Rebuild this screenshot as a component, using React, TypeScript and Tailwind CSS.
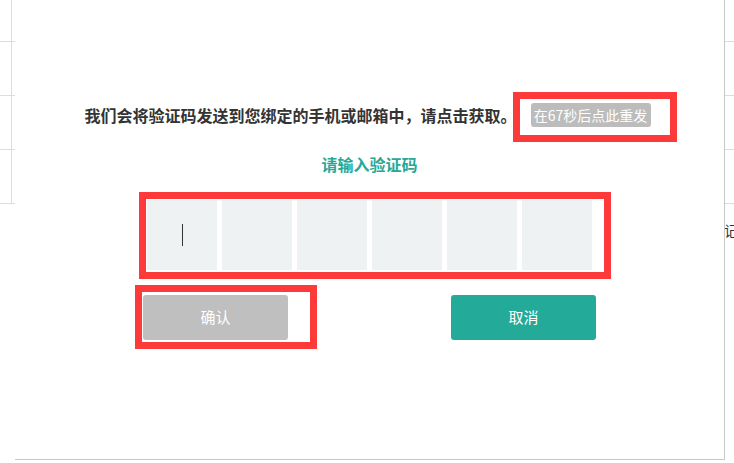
import React from "react";

const RED = "border-[#fd3a3a]";

function BgRow({ h }: { h: string }) {
  return (
    <div className={`flex border-b border-[#dddddd] ${h}`}>
      <div className="w-[12px] border-r border-[#dddddd]" />
      <div className="flex-1" />
    </div>
  );
}

export default function App() {
  return (
    <div className="relative w-[734px] h-[463px] overflow-hidden bg-white font-['Noto_Sans_CJK_SC','Noto_Sans',sans-serif]">
      {/* background page table */}
      <div className="flex flex-col">
        <BgRow h="h-[42px]" />
        <BgRow h="h-[54px]" />
        <BgRow h="h-[54px]" />
        <BgRow h="h-[54px]" />
        <div className="flex h-[52px] items-center justify-end">
          <span className="mr-[-4px] text-[14px] text-[#333]">登记</span>
        </div>
      </div>

      {/* modal */}
      <div className="absolute left-[15px] top-0 flex h-[460px] w-[710px] flex-col border-b border-r border-[#c8c8c8] bg-white pt-[103px]">
        <div className="flex h-[24px] items-center justify-center gap-[14px] pr-[4px]">
          <span className="whitespace-nowrap text-[16px] font-bold leading-[24px] text-[#333333]">
            我们会将验证码发送到您绑定的手机或邮箱中，请点击获取。
          </span>
          <div className="relative">
            <button className="flex h-[24px] w-[120px] items-center justify-center whitespace-nowrap rounded-[3px] bg-[#bcbcbc] text-[14px] leading-[24px] text-white">
              在67秒后点此重发
            </button>
            <div className={`pointer-events-none absolute bottom-[-15px] left-[-18px] right-[-26px] top-[-11px] border-[7px] ${RED}`} />
          </div>
        </div>

        <div className="mt-[25px] h-[24px] text-center text-[16px] font-bold leading-[24px] text-[#26a898]">
          请输入验证码
        </div>

        <div className="relative mt-[24px] flex gap-[5px] self-center">
          {[0, 1, 2, 3, 4, 5].map((i) => (
            <div key={i} className="flex h-[70px] w-[70px] items-center justify-center bg-[#eef2f3]">
              {i === 0 && <div className="h-[22px] w-[1px] bg-[#333333]" />}
            </div>
          ))}
          <div className={`pointer-events-none absolute bottom-[-9px] left-[-8px] right-[-19px] top-[-8px] border-[7px] ${RED}`} />
        </div>

        <div className="mt-[25px] flex justify-center gap-[163px]">
          <div className="relative">
            <button className="flex h-[45px] w-[145px] items-center justify-center rounded-[3px] bg-[#bebfbe] text-[15px] text-white">
              确认
            </button>
            <div className={`pointer-events-none absolute bottom-[-9px] left-[-8px] right-[-29px] top-[-10px] border-[7px] ${RED}`} />
          </div>
          <button className="flex h-[45px] w-[145px] items-center justify-center rounded-[3px] bg-[#23aa99] text-[15px] text-white">
            取消
          </button>
        </div>
      </div>
    </div>
  );
}
